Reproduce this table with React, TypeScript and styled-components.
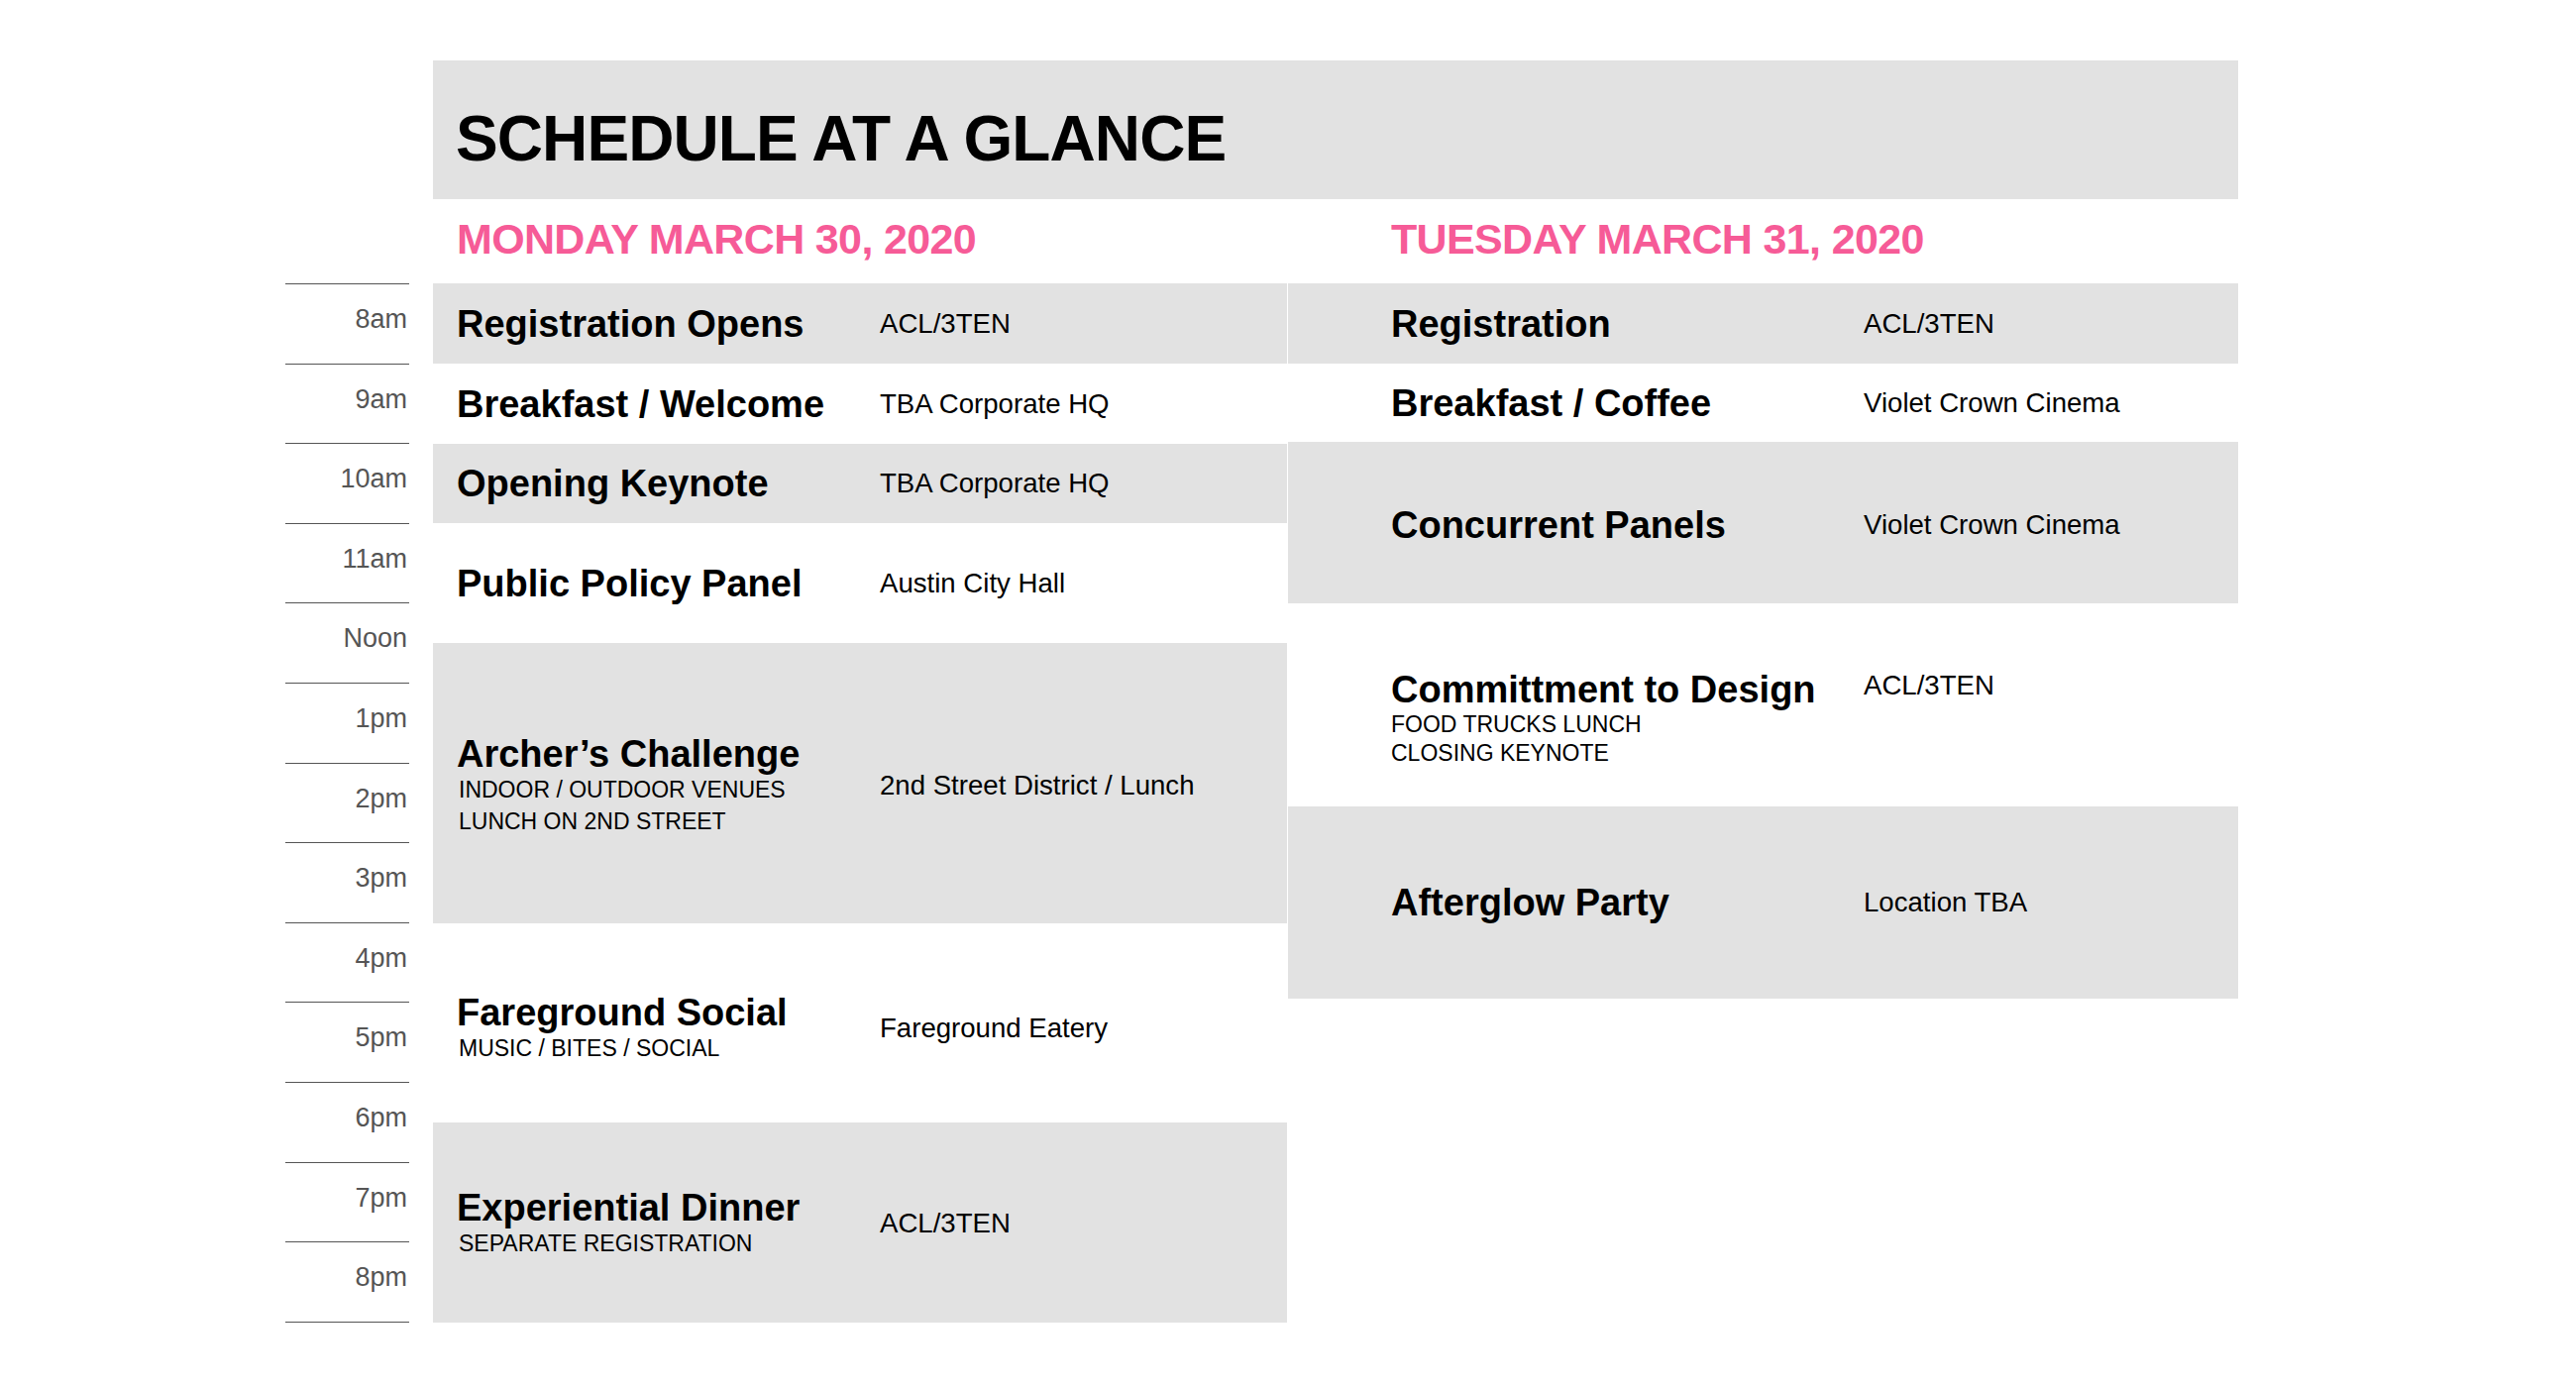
import React from "react";
import styled, { createGlobalStyle } from "styled-components";

const GlobalStyle = createGlobalStyle`
  html, body {
    margin: 0;
    padding: 0;
    background: #ffffff;
  }
  body {
    font-family: "Liberation Sans", Arial, Helvetica, sans-serif;
    color: #000000;
  }
`;

const ROW = 80.6;
const GRAY = "#e2e2e2";
const PINK = "#f65b97";

const Page = styled.div`
  width: 2600px;
  height: 1400px;
  box-sizing: border-box;
  padding: 61px 0 0 288px;
  display: grid;
  grid-template-columns: 125px 1822px;
  column-gap: 24px;
  align-items: start;
`;

const TimeColumn = styled.div`
  margin-top: 225px;
  display: flex;
  flex-direction: column;
  border-bottom: 1px solid #555555;
`;

const TimeSlot = styled.div`
  height: ${ROW}px;
  box-sizing: border-box;
  border-top: 1px solid #555555;
  padding: 22px 2px 0 0;
  text-align: right;
  font-size: 27px;
  line-height: 27px;
  color: #555555;
`;

const Board = styled.div`
  display: flex;
  flex-direction: column;
`;

const Banner = styled.header`
  height: 140px;
  box-sizing: border-box;
  background: ${GRAY};
  padding: 47px 0 0 23px;
`;

const BannerTitle = styled.h1`
  margin: 0;
  font-size: 64px;
  line-height: 64px;
  font-weight: 700;
  letter-spacing: -0.9px;
  color: #000000;
`;

const Days = styled.div`
  display: grid;
  grid-template-columns: 862px 959px;
  column-gap: 1px;
`;

const DayColumn = styled.section`
  display: flex;
  flex-direction: column;
`;

const DayHeading = styled.h2<{ $indent: number }>`
  margin: 0;
  height: 85px;
  box-sizing: border-box;
  padding: 19px 0 0 ${(p) => p.$indent}px;
  font-size: 43px;
  line-height: 43px;
  font-weight: 700;
  letter-spacing: -0.65px;
  color: ${PINK};
`;

const EventBlock = styled.div<{
  $shade: boolean;
  $indent: number;
  $height: number;
  $top?: number;
  $nudge?: number;
}>`
  display: flex;
  align-items: ${(p) => (p.$top != null ? "flex-start" : "center")};
  height: ${(p) => p.$height}px;
  box-sizing: border-box;
  padding: ${(p) => p.$top ?? p.$nudge ?? 0}px 0 0 ${(p) => p.$indent}px;
  background: ${(p) => (p.$shade ? GRAY : "transparent")};
`;

const EventInfo = styled.div<{ $width: number }>`
  flex: none;
  width: ${(p) => p.$width}px;
  display: flex;
  flex-direction: column;
`;

const EventTitle = styled.div`
  font-size: 38px;
  line-height: 42px;
  font-weight: 700;
  color: #000000;
  white-space: nowrap;
`;

const EventNote = styled.div<{ $indent: number; $lineHeight: number }>`
  font-size: 23px;
  line-height: ${(p) => p.$lineHeight}px;
  padding-left: ${(p) => p.$indent}px;
  color: #000000;
  white-space: nowrap;
`;

const Venue = styled.div`
  font-size: 27.6px;
  line-height: 34px;
  color: #000000;
  white-space: nowrap;
`;

type EventItem = {
  title: string;
  venue: string;
  notes?: string[];
  shade: boolean;
  height: number;
  top?: number;
  nudge?: number;
};

type Day = {
  label: string;
  indent: number;
  titleWidth: number;
  noteIndent: number;
  noteLineHeight: number;
  events: EventItem[];
};

const times = [
  "8am",
  "9am",
  "10am",
  "11am",
  "Noon",
  "1pm",
  "2pm",
  "3pm",
  "4pm",
  "5pm",
  "6pm",
  "7pm",
  "8pm",
];

const days: Day[] = [
  {
    label: "MONDAY MARCH 30, 2020",
    indent: 24,
    titleWidth: 427,
    noteIndent: 2,
    noteLineHeight: 31.5,
    events: [
      { title: "Registration Opens", venue: "ACL/3TEN", shade: true, height: 81 },
      { title: "Breakfast / Welcome", venue: "TBA Corporate HQ", shade: false, height: 81 },
      { title: "Opening Keynote", venue: "TBA Corporate HQ", shade: true, height: 80 },
      { title: "Public Policy Panel", venue: "Austin City Hall", shade: false, height: 121 },
      {
        title: "Archer\u2019s Challenge",
        notes: ["INDOOR / OUTDOOR VENUES", "LUNCH ON 2ND STREET"],
        venue: "2nd Street District / Lunch",
        shade: true,
        height: 283,
        nudge: 4,
      },
      {
        title: "Fareground Social",
        notes: ["MUSIC / BITES / SOCIAL"],
        venue: "Fareground Eatery",
        shade: false,
        height: 201,
        nudge: 10,
      },
      {
        title: "Experiential Dinner",
        notes: ["SEPARATE REGISTRATION"],
        venue: "ACL/3TEN",
        shade: true,
        height: 202,
        nudge: 2,
      },
    ],
  },
  {
    label: "TUESDAY MARCH 31, 2020",
    indent: 104,
    titleWidth: 477,
    noteIndent: 0,
    noteLineHeight: 28.5,
    events: [
      { title: "Registration", venue: "ACL/3TEN", shade: true, height: 81 },
      { title: "Breakfast / Coffee", venue: "Violet Crown Cinema", shade: false, height: 79 },
      {
        title: "Concurrent Panels",
        venue: "Violet Crown Cinema",
        shade: true,
        height: 163,
        nudge: 5,
      },
      {
        title: "Committment to Design",
        notes: ["FOOD TRUCKS LUNCH", "CLOSING KEYNOTE"],
        venue: "ACL/3TEN",
        shade: false,
        height: 205,
        top: 66,
      },
      { title: "Afterglow Party", venue: "Location TBA", shade: true, height: 194 },
    ],
  },
];

export default function App() {
  return (
    <>
      <GlobalStyle />
      <Page>
        <TimeColumn>
          {times.map((t) => (
            <TimeSlot key={t}>{t}</TimeSlot>
          ))}
        </TimeColumn>
        <Board>
          <Banner>
            <BannerTitle>SCHEDULE AT A GLANCE</BannerTitle>
          </Banner>
          <Days>
            {days.map((day) => (
              <DayColumn key={day.label}>
                <DayHeading $indent={day.indent}>{day.label}</DayHeading>
                {day.events.map((ev) => (
                  <EventBlock
                    key={ev.title}
                    $shade={ev.shade}
                    $indent={day.indent}
                    $height={ev.height}
                    $top={ev.top}
                    $nudge={ev.nudge}
                  >
                    <EventInfo $width={day.titleWidth}>
                      <EventTitle>{ev.title}</EventTitle>
                      {ev.notes?.map((n) => (
                        <EventNote
                          key={n}
                          $indent={day.noteIndent}
                          $lineHeight={day.noteLineHeight}
                        >
                          {n}
                        </EventNote>
                      ))}
                    </EventInfo>
                    <Venue>{ev.venue}</Venue>
                  </EventBlock>
                ))}
              </DayColumn>
            ))}
          </Days>
        </Board>
      </Page>
    </>
  );
}
